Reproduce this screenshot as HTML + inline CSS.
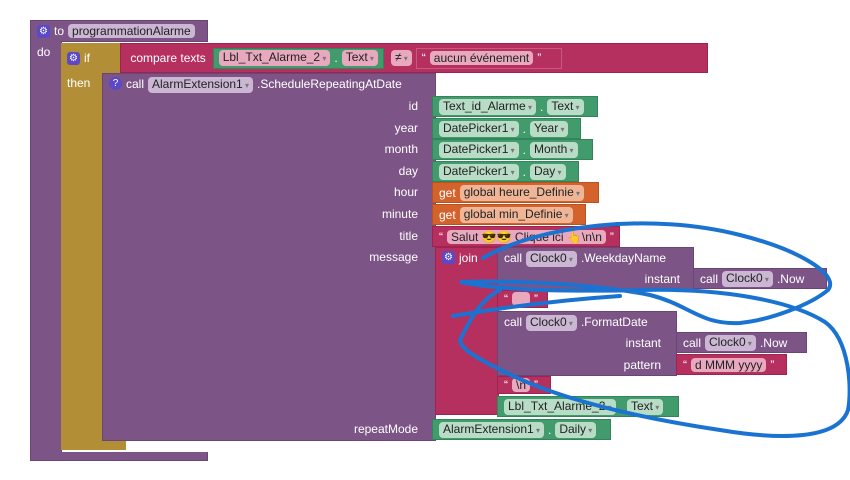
<!DOCTYPE html><html><head><meta charset="utf-8"><style>
body{margin:0;width:850px;height:480px;background:#fff;position:relative;overflow:hidden;font-family:"Liberation Sans",Arial,sans-serif;font-size:12px;color:#fff}
.b{position:absolute;box-sizing:border-box;display:flex;align-items:center;white-space:nowrap;padding-left:6px;gap:4px}
.p{background:#7c5586;border:1px solid #6a4676}
.g{background:#b28f37}
.r{background:#b6305f;border:1px solid #9c244f}
.gr{background:#419b6c;border:1px solid #338559}
.o{background:#d4622d;border:1px solid #b9521f}
.f{border-radius:4px;padding:0 4px;color:#222;line-height:14px}
.p .f,.f.pf{background:#cbb6d3}
.gr .f{background:#b8dcc6}
.r .f{background:#e8a9bf}
.o .f{background:#f0b597}
.dd:after{content:" ▾";font-size:8px;color:#777}
.ic{width:13px;height:13px;background:#5b49c6;border-radius:3px;display:inline-block;text-align:center;line-height:13px;font-size:10px}
.lbl{position:absolute;font-size:12px;text-align:right;width:100px}
</style></head><body>
<div class="b p" style="left:30px;top:20px;width:178px;height:22px"><span class="ic">⚙</span>to <span class="f">programmationAlarme</span></div>
<div class="b p" style="left:30px;top:41px;width:32px;height:420px;align-items:flex-start;padding-top:4px;border-top:0">do</div>
<div class="b p" style="left:30px;top:452px;width:178px;height:9px;border-top:0"></div>
<div class="b g" style="left:61px;top:43px;width:60px;height:30px"><span class="ic">⚙</span> if</div>
<div class="b g" style="left:61px;top:72px;width:42px;height:378px;align-items:flex-start;padding-top:4px">then</div>
<div class="b g" style="left:61px;top:438px;width:65px;height:12px"></div>
<div class="b r" style="left:120px;top:43px;width:588px;height:30px">&nbsp;compare texts
 <div class="b gr" style="position:static;height:21px;padding:0 5px;margin-left:3px"><span class="f dd">Lbl_Txt_Alarme_2</span>.<span class="f dd">Text</span></div>
 <span class="f dd" style="margin-left:3px">≠</span>
 <div class="b r" style="position:static;height:21px;padding:0 5px;width:146px;border-color:#c9577f">“ <span class="f">aucun événement</span> ”</div>
</div>
<div class="b p" style="left:102px;top:73px;width:334px;height:368px;align-items:flex-start;padding-top:3px"><span class="ic" style="border-radius:7px">?</span>call <span class="f dd">AlarmExtension1</span>.ScheduleRepeatingAtDate</div>
<div class="lbl" style="left:318px;top:99px">id</div>
<div class="lbl" style="left:318px;top:121px">year</div>
<div class="lbl" style="left:318px;top:142px">month</div>
<div class="lbl" style="left:318px;top:164px">day</div>
<div class="lbl" style="left:318px;top:185px">hour</div>
<div class="lbl" style="left:318px;top:207px">minute</div>
<div class="lbl" style="left:318px;top:229px">title</div>
<div class="lbl" style="left:318px;top:250px">message</div>
<div class="lbl" style="left:318px;top:422px">repeatMode</div>
<div class="b gr" style="left:432px;top:96px;width:166px;height:21px"><span class="f dd">Text_id_Alarme</span>.<span class="f dd">Text</span></div>
<div class="b gr" style="left:432px;top:118px;width:149px;height:21px"><span class="f dd">DatePicker1</span>.<span class="f dd">Year</span></div>
<div class="b gr" style="left:432px;top:139px;width:161px;height:21px"><span class="f dd">DatePicker1</span>.<span class="f dd">Month</span></div>
<div class="b gr" style="left:432px;top:161px;width:147px;height:21px"><span class="f dd">DatePicker1</span>.<span class="f dd">Day</span></div>
<div class="b o" style="left:432px;top:182px;width:167px;height:21px">get <span class="f dd">global heure_Definie</span></div>
<div class="b o" style="left:432px;top:204px;width:154px;height:21px">get <span class="f dd">global min_Definie</span></div>
<div class="b r" style="left:432px;top:226px;width:188px;height:21px">“ <span class="f">Salut 😎😎 Clique ici 👆\n\n</span> ”</div>
<div class="b r" style="left:435px;top:247px;width:64px;height:168px;align-items:flex-start;padding-top:3px"><span class="ic">⚙</span>join</div>
<div class="b p" style="left:497px;top:247px;width:197px;height:43px;align-items:flex-start;padding-top:3px">call <span class="f dd">Clock0</span>.WeekdayName</div>
<div class="lbl" style="left:580px;top:272px">instant</div>
<div class="b p" style="left:693px;top:268px;width:134px;height:21px">call <span class="f dd">Clock0</span>.Now</div>
<div class="b r" style="left:497px;top:290px;width:51px;height:18px">“ <span class="f" style="width:10px">&nbsp;</span> ”</div>
<div class="b p" style="left:497px;top:311px;width:180px;height:65px;align-items:flex-start;padding-top:3px">call <span class="f dd">Clock0</span>.FormatDate</div>
<div class="lbl" style="left:561px;top:336px">instant</div>
<div class="lbl" style="left:561px;top:358px">pattern</div>
<div class="b p" style="left:676px;top:332px;width:131px;height:21px">call <span class="f dd">Clock0</span>.Now</div>
<div class="b r" style="left:676px;top:354px;width:111px;height:21px">“ <span class="f">d MMM yyyy</span> ”</div>
<div class="b r" style="left:497px;top:376px;width:54px;height:18px">“ <span class="f">\n</span> ”</div>
<div class="b gr" style="left:497px;top:396px;width:182px;height:21px"><span class="f dd">Lbl_Txt_Alarme_2</span>.<span class="f dd">Text</span></div>
<div class="b gr" style="left:432px;top:419px;width:179px;height:21px"><span class="f dd">AlarmExtension1</span>.<span class="f dd">Daily</span></div>
<svg style="position:absolute;left:0;top:0" width="850" height="480"><path d="M483,258 C540,225 650,212 740,235 C800,250 840,275 828,290 C810,305 770,320 740,323 C700,325 690,305 650,295 C600,285 520,280 460,282 C500,290 560,292 640,290 C720,288 790,300 825,322 C850,340 852,390 848,410 C838,440 780,440 720,430 C640,418 560,400 505,372 C470,355 455,345 462,336 C470,320 480,300 500,290 M453,316 C500,308 560,300 620,296" fill="none" stroke="#1a73d1" stroke-width="4" stroke-linecap="round"/></svg>
</body></html>
